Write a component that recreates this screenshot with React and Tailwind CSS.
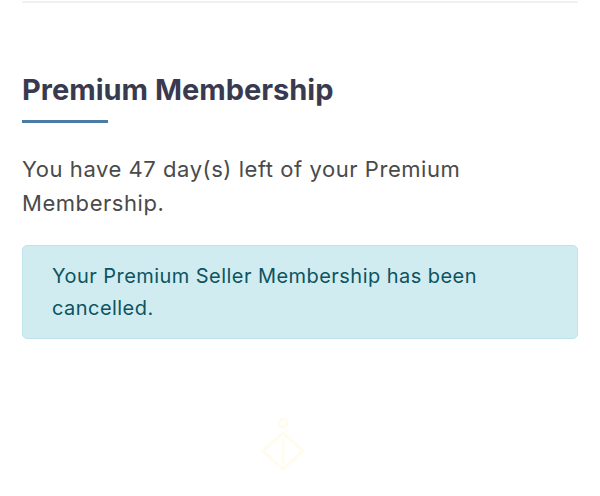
export default function App() {
  return (
    <div className="w-[600px] h-[496px] bg-white overflow-hidden font-['Inter',sans-serif]">
      <div className="mx-[22px] mt-[1px] border-t-2 border-[#f0f0f2]" />
      <div className="px-[22px] pt-[69px]">
        <h2 className="text-[29px] leading-[36px] font-bold text-[#393a4f]">Premium Membership</h2>
        <div className="mt-[12px] w-[86px] h-[3px] bg-[#4b7ca6]" />
        <p className="mt-[29px] text-[22px] leading-[34px] tracking-[0.55px] text-[#4a4a4a]">
          You have 47 day(s) left of your Premium Membership.
        </p>
        <div className="mt-[25px] rounded-[5px] border border-[#bee5eb] bg-[#d1ecf1] px-[29px] pt-[14px] pb-[14px]">
          <p className="text-[20px] leading-[32px] tracking-[0.45px] text-[#0c5460]">
            Your Premium Seller Membership has been cancelled.
          </p>
        </div>
        <div className="flex justify-center mt-[78px] ml-[-34px]">
          <svg width="56" height="56" viewBox="0 0 56 56" fill="none" stroke="#fffcee" strokeWidth="3">
            <circle cx="28" cy="6" r="4" />
            <path d="M28 16 L48 34 L28 52 L8 34 Z" />
            <path d="M28 22 V46" />
          </svg>
        </div>
      </div>
    </div>
  );
}
